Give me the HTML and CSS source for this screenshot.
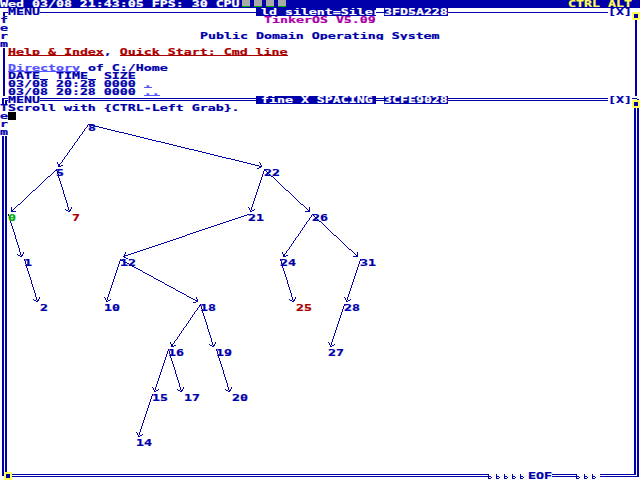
FILE: index.html
```html
<!DOCTYPE html>
<html lang="en">
<head>
<meta charset="utf-8">
<title>TinkerOS</title>
<link rel="stylesheet" href="styles.css">
</head>
<body>
<header class="bar">
  <span class="cell"><span class="t">Wed 03/08 21:43:05 FPS: 30 CPU</span></span>
  <div class="cpus"><i></i><i></i><i></i><i></i></div>
  <span class="cell keys"><span class="t">CTRL ALT</span></span>
</header>

<section class="win top">
  <svg class="corner" viewBox="0 0 8 8"><path d="M3 4h5v1H5v3H3z"/></svg>
  <div class="head">
    <span class="cell"><span class="t">MENU</span></span>
    <i class="rule left"></i>
    <span class="cell title"><span class="t">ld silent=Siler</span></span>
    <i class="rule gap"></i>
    <span class="cell inv"><span class="t">3FD5A228</span></span>
    <i class="rule fill"></i>
    <span class="cell"><span class="t">[X]</span></span>
  </div>
  <div class="nook"><i class="handle"></i></div>
  <div class="side">
    <span class="cell letter"><span class="t">f</span></span>
    <span class="cell letter"><span class="t">e</span></span>
    <span class="cell letter"><span class="t">r</span></span>
    <span class="cell letter"><span class="t">m</span></span>
    <i class="edge"></i>
  </div>
  <div class="body">
    <p class="row name"><span class="cell"><span class="t">TinkerOS V5.09</span></span></p>
    <p class="row"></p>
    <p class="row motto"><span class="cell"><span class="t">Public Domain Operating System</span></span></p>
    <p class="row"></p>
    <p class="row"><a class="cell link red"><span class="t">Help &amp; Index</span></a><span class="cell"><span class="t">, </span></span><a class="cell link red"><span class="t">Quick Start: Cmd line</span></a></p>
    <p class="row"></p>
    <p class="row"><a class="cell link"><span class="t">Directory</span></a><span class="cell"><span class="t"> of C:/Home</span></span></p>
    <p class="row"><span class="cell"><span class="t">DATE</span></span><span class="cell under"><span class="t">_</span></span><span class="cell"><span class="t"> TIME</span></span><span class="cell under"><span class="t">_</span></span><span class="cell"><span class="t"> SIZE</span></span></p>
    <p class="row"><span class="cell"><span class="t">03/08 20:28 0000 </span></span><a class="cell link"><span class="t">.</span></a></p>
    <p class="row"><span class="cell"><span class="t">03/08 20:28 0000 </span></span><a class="cell link"><span class="t">..</span></a></p>
  </div>
  <div class="side right"><i class="edge"></i></div>
</section>

<section class="win main">
  <svg class="corner" viewBox="0 0 8 8"><path d="M2 2h6v1H4v5H2zM5 4h3v1H7v3H5z"/></svg>
  <div class="head">
    <span class="cell"><span class="t">MENU</span></span>
    <i class="rule left"></i>
    <span class="cell title"><span class="t">fine X SPACING</span></span>
    <i class="rule gap"></i>
    <span class="cell inv"><span class="t">3CFE9028</span></span>
    <i class="rule fill"></i>
    <span class="cell"><span class="t">[X]</span></span>
  </div>
  <div class="nook"><svg class="corner" viewBox="0 0 8 8"><path d="M0 2h5v1H0zM5 3h2v1H5z"/></svg><i class="handle"></i></div>
  <div class="side">
    <span class="cell letter"><span class="t">T</span></span>
    <span class="cell letter"><span class="t">e</span></span>
    <span class="cell letter"><span class="t">r</span></span>
    <span class="cell letter"><span class="t">m</span></span>
    <i class="edge"></i>
  </div>
  <div class="body">
    <p class="row"><span class="cell"><span class="t">Scroll with {CTRL-Left Grab}.</span></span></p>
    <p class="row"><i class="cursor"></i></p>
    <div class="tree" id="tree"></div>
  </div>
  <div class="side right"><i class="edge"></i></div>
  <div class="nook"><svg class="corner" viewBox="0 0 8 8"><path d="M2 0h2v4H2z"/></svg><i class="handle"></i></div>
  <div class="foot">
    <i class="rule fill"></i>
    <svg class="marks" width="40" height="8"><path id="m" d="M0 2h1v2h2v1H1v1h2v1H0zM3 5h1v1H3z"/><use href="#m" x="8"/><use href="#m" x="16"/><use href="#m" x="24"/><use href="#m" x="32"/></svg>
    <span class="cell"><span class="t">EOF</span></span>
    <i class="rule eof"></i>
    <svg class="marks" width="24" height="8"><use href="#m"/><use href="#m" x="8"/><use href="#m" x="16"/></svg>
    <i class="rule tail"></i>
  </div>
  <svg class="corner" viewBox="0 0 8 8"><path d="M2 0h2v3H0V2h2zM5 0h2v5H0V4h5z"/></svg>
</section>
<script src="tree.js"></script>
</body>
</html>
```
FILE: styles.css
```css
* { box-sizing: border-box; }
body {
  margin: 0;
  width: 640px;
  height: 480px;
  overflow: hidden;
  display: grid;
  grid-template-rows: 8px 88px 384px;
  background: #fff;
  color: #0000aa;
  font: bold 13.289px/11px "DejaVu Sans Mono", monospace;
}
i { display: block; }

/* 8x8 character cells */
.cell { display: block; height: 8px; flex: none; overflow: hidden; white-space: pre; }
.t {
  display: block;
  height: 11px;
  transform: scaleY(.72);
  transform-origin: 0 0;
  -webkit-text-stroke: .3px currentColor;
}

.bar { display: flex; background: #0000aa; color: #fff; }
.cpus { display: flex; gap: 4px; padding-left: 2px; }
.cpus i { width: 8px; height: 7px; background: #aaa; border-bottom: 1px solid #00aa00; }
.keys { margin-left: auto; margin-right: 8px; color: #ffff55; }

.win { display: grid; grid-template-columns: 8px 624px 8px; }
.top { grid-template-rows: 8px 80px; }
.main { grid-template-rows: 8px 368px 8px; }
.corner { display: block; width: 8px; height: 8px; fill: #0000aa; shape-rendering: crispEdges; }
.head, .foot { display: flex; height: 8px; }
.rule { height: 8px; background: linear-gradient(#0000aa, #0000aa) 0 4px / 100% 1px no-repeat; }
.main .rule {
  background:
    linear-gradient(#0000aa, #0000aa) 0 2px / 100% 1px no-repeat,
    linear-gradient(#0000aa, #0000aa) 0 4px / 100% 1px no-repeat;
}
.left { width: 216px; }
.gap { width: 8px; }
.fill { flex: 1; }
.eof { width: 24px; }
.tail { width: 32px; }
.title { width: 120px; padding-left: 5px; background: #0000aa; color: #fff; }
.inv { background: #0000aa; color: #fff; }
.marks { display: block; fill: #0000aa; shape-rendering: crispEdges; }

.nook { position: relative; z-index: 2; }
.handle {
  position: absolute;
  left: 0;
  top: 4px;
  width: 8px;
  height: 8px;
  background: #0000aa;
  border: 2px solid #ffff55;
}
.foot { min-width: 0; }
.main .nook:nth-last-child(3) .handle { left: 4px; top: 0; }

.side { display: flex; flex-direction: column; }
.letter { width: 8px; }
.edge { flex: 1; width: 2px; margin-left: 3px; background: #0000aa; }
.main .edge { width: 5px; margin-left: 2px; background: linear-gradient(90deg, #0000aa 2px, #fff 2px 3px, #0000aa 3px); }

.row { display: flex; height: 8px; margin: 0; }
.name { padding-left: 256px; color: #aa00aa; }
.motto { padding-left: 192px; }
.link { color: #5555ff; box-shadow: inset 0 -1px currentColor; }
.under { box-shadow: inset 0 -1px currentColor; }
.red { color: #aa0000; }
.cursor { width: 8px; height: 8px; background: #000; }

/* free canvas holding the binary tree */
.tree { position: relative; height: 352px; }
.tree svg { position: absolute; left: -8px; top: 0; width: 632px; height: 352px; fill: #0000aa; shape-rendering: crispEdges; }
.node { position: absolute; }
.min { color: #00aa00; }
.leaf { color: #aa0000; }
```
FILE: tree.js
```js
// Node: value, x, level, parent value, optional colour class
const nodes = [
  [8, 88, 0], [5, 56, 1, 8], [22, 264, 1, 8],
  [0, 8, 2, 5, 'min'], [7, 72, 2, 5, 'leaf'], [21, 248, 2, 22], [26, 312, 2, 22],
  [1, 24, 3, 0], [12, 120, 3, 21], [24, 280, 3, 26], [31, 360, 3, 26],
  [2, 40, 4, 1], [10, 104, 4, 12], [18, 200, 4, 12], [25, 296, 4, 24, 'leaf'], [28, 344, 4, 31],
  [16, 168, 5, 18], [19, 216, 5, 18], [27, 328, 5, 28],
  [15, 152, 6, 16], [17, 184, 6, 16], [20, 232, 6, 19], [14, 136, 7, 15]
];
const byValue = new Map(nodes.map(n => [n[0], n]));
const nodeY = level => 4 + level * 45;
let pixels = '';

// Whole-pixel line
function line(x0, y0, x1, y1) {
  const n = Math.max(Math.abs(x1 - x0), Math.abs(y1 - y0));
  for (let i = 0; i <= n; i++) {
    const x = Math.round(x0 + (x1 - x0) * i / n);
    const y = Math.round(y0 + (y1 - y0) * i / n);
    pixels += `M${x} ${y}h1v1h-1z`;
  }
}

let labels = '';
for (const [value, x, level, parent, cls] of nodes) {
  const y = nodeY(level);
  labels += `<span class="cell node ${cls || ''}" style="left:${x - 8}px;top:${y}px"><span class="t">${value}</span></span>`;
  if (parent === undefined) continue;
  const p = byValue.get(parent);
  const px = p[1], py = nodeY(p[2]);
  const right = x > px;
  const tx = right ? x - 3 : x + (x === 56 ? 2 : 3) - (Math.abs(x - px) === 16 ? 1 : 0);
  const ty = y - 3;
  line(px, py, tx, ty);
  const back = Math.atan2(py - ty, px - tx);
  for (const turn of [-Math.PI / 4, Math.PI / 4]) {
    line(tx, ty, Math.round(tx + 4.4 * Math.cos(back + turn)), Math.round(ty + 4.4 * Math.sin(back + turn)));
  }
}
document.getElementById('tree').innerHTML =
  `<svg viewBox="0 0 632 352"><path d="${pixels}"/></svg>${labels}`;
```
